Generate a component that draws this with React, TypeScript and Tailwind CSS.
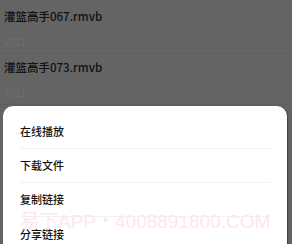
import React from "react";

const files = ["灌篮高手067.rmvb", "灌篮高手073.rmvb"];
const actions = ["在线播放", "下载文件", "复制链接", "分享链接"];

export default function App() {
  return (
    <div
      className="relative w-[292px] h-[244px] overflow-hidden bg-[#646464]"
      style={{ fontFamily: '"Noto Sans CJK SC", "Noto Sans", sans-serif' }}
    >
      <div className="pt-[3px]">
        {files.map((f) => (
          <div key={f} className="pl-[4px] pt-[5px] pb-[4px] border-b border-[#5e5e5e]">
            <div className="text-[11.5px] leading-[16px] text-[#111111] font-medium">{f}</div>
            <div className="mt-[11px] text-[10px] leading-[14px] text-[#6f6f6f]">2021</div>
          </div>
        ))}
      </div>

      <div className="absolute left-[3px] top-[106px] w-[284px] h-[160px] bg-white rounded-t-[10px] pt-[9px] shadow-[1px_0_1px_rgba(0,0,0,0.35)]">
        {actions.map((a, i) => (
          <div
            key={a}
            className={`mx-[17px] h-[34px] flex items-center text-[11px] text-[#111111] font-medium ${
              i < actions.length - 1 ? "border-b border-[#f1f1f1]" : ""
            }`}
          >
            {a}
          </div>
        ))}
        <div
          className="absolute left-[17px] top-[107px] w-[252px] text-[19px] leading-[18px] text-[#fde6f3] whitespace-nowrap pointer-events-none"
          style={{ fontFamily: '"Liberation Sans", "Noto Sans CJK SC", sans-serif' }}
        >
          易下APP・4008891800.COM
        </div>
      </div>
    </div>
  );
}
